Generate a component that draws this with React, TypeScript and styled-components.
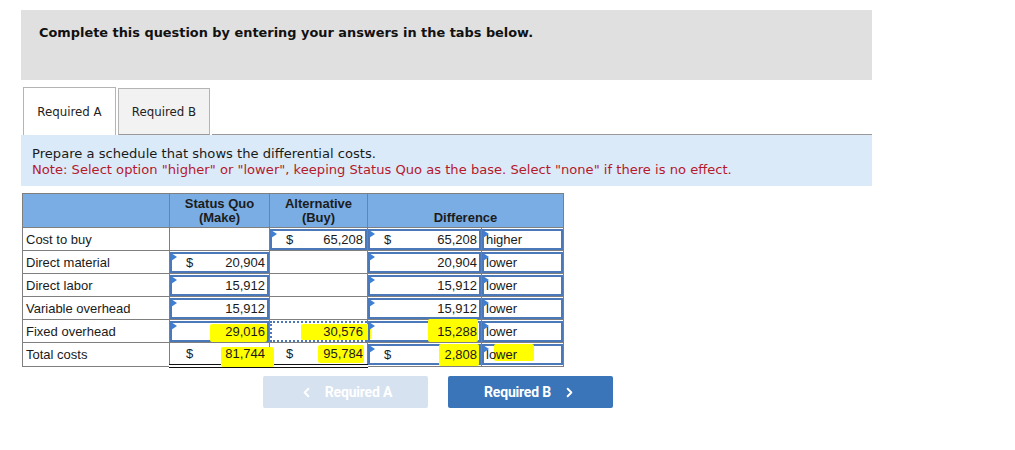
import React from "react";
import styled, { createGlobalStyle, css } from "styled-components";
import { ChevronLeft, ChevronRight } from "lucide-react";

const Global = createGlobalStyle`
  html, body { margin: 0; padding: 0; background: #fff; }
  body { font-family: "DejaVu Sans", Verdana, sans-serif; }
`;

const Page = styled.div`
  width: 851px;
  padding: 10px 0 0 21px;
`;

const Banner = styled.div`
  height: 70px;
  background: #e0e0e0;
  padding: 15px 0 0 18px;
  box-sizing: border-box;
  font-family: "DejaVu Sans", Verdana, sans-serif;
  font-weight: bold;
  font-size: 12.9px;
  color: #111;
`;

const TabBar = styled.div`
  display: flex;
  align-items: flex-end;
  gap: 2px;
  margin-top: 7px;
  padding-left: 2px;
  height: 48px;
`;

const Tab = styled.div<{ $active?: boolean }>`
  width: ${(p) => (p.$active ? 93 : 92)}px;
  height: ${(p) => (p.$active ? 48 : 47)}px;
  box-sizing: border-box;
  border: 1px solid #b4b4b4;
  border-bottom: ${(p) => (p.$active ? "none" : "1px solid #999")};
  background: ${(p) => (p.$active ? "#fff" : "#f2f2f2")};
  display: flex;
  align-items: center;
  justify-content: center;
  font-family: "DejaVu Sans", Verdana, sans-serif;
  font-size: 11.8px;
  color: #222;
  padding-top: 1px;
`;

const TabRule = styled.div`
  flex: 1;
  border-bottom: 1px solid #999;
`;

const Instructions = styled.div`
  height: 51px;
  background: #dbeaf8;
  box-sizing: border-box;
  padding: 11px 0 0 11px;
  font-family: "DejaVu Sans", Verdana, sans-serif;
  font-size: 13.1px;
  line-height: 16px;
  color: #1a1a1a;
`;

const Note = styled.div`
  color: #b5192c;
`;

const Table = styled.table`
  margin: 7px 0 0 1px;
  border-collapse: collapse;
  table-layout: fixed;
  width: 541px;
  font-family: "Liberation Sans", Arial, sans-serif;
  font-size: 13px;
  color: #1a1a1a;
`;

const HeadCell = styled.th`
  background: #79ade4;
  border: 1px solid #7f7f7f;
  height: 34px;
  box-sizing: border-box;
  padding: 0 0 2px;
  vertical-align: bottom;
  font-weight: bold;
  font-size: 13px;
  line-height: 14px;
  color: #1c1c1c;
`;

const LabelCell = styled.td`
  border: 1px solid #7f7f7f;
  height: 23px;
  box-sizing: border-box;
  padding: 0 0 0 3px;
  white-space: nowrap;
`;

const Cell = styled.td<{ $total?: boolean }>`
  border: 1px solid #7f7f7f;
  height: 23px;
  box-sizing: border-box;
  padding: 0;
  ${(p) =>
    p.$total &&
    css`
      border-bottom: 4px double #111;
    `}
`;

const Field = styled.div<{ $kind: "input" | "dotted" | "plain" }>`
  position: relative;
  display: flex;
  align-items: center;
  height: 21px;
  box-sizing: border-box;
  padding: 0 2px 0 14px;
  ${(p) =>
    p.$kind === "input" &&
    css`
      border: 2px solid #4a78b9;
    `}
  ${(p) =>
    p.$kind === "dotted" &&
    css`
      border: 2px dotted #4a78b9;
    `}
  ${(p) =>
    p.$kind === "plain" &&
    css`
      border: 2px solid transparent;
    `}
`;

const Marker = styled.span`
  position: absolute;
  top: -1px;
  left: -1px;
  width: 0;
  height: 0;
  border-top: 4px solid transparent;
  border-bottom: 4px solid transparent;
  border-left: 6px solid #3d7fd6;
  z-index: 2;
`;

const Dollar = styled.span`
  z-index: 1;
`;

const Amount = styled.span`
  margin-left: auto;
  z-index: 1;
`;

const Word = styled.span`
  padding-left: 1px;
  z-index: 1;
`;

const WordField = styled(Field)`
  padding: 0 0 0 1px;
`;

const Highlight = styled.span`
  position: absolute;
  background: #ffff00;
  z-index: 0;
  border-radius: 2px;
`;

const ButtonRow = styled.div`
  display: flex;
  gap: 20px;
  margin: 8px 0 0 242px;
`;

const NavButton = styled.button<{ $disabled?: boolean }>`
  width: 165px;
  height: 32px;
  border: none;
  border-radius: 2px;
  background: ${(p) => (p.$disabled ? "#d6e2f0" : "#3a75ba")};
  color: #fff;
  display: flex;
  align-items: center;
  justify-content: center;
  gap: 11px;
  font-family: Roboto, "Liberation Sans", Arial, sans-serif;
  font-weight: 700;
  font-size: 14px;
  letter-spacing: -0.2px;
  padding: 0;
`;

type HL = { l: number; t: number; w: number; h: number };

function Money({
  kind,
  dollar,
  value,
  marker,
  hl,
}: {
  kind: "input" | "dotted" | "plain";
  dollar?: boolean;
  value?: string;
  marker?: boolean;
  hl?: HL;
}) {
  return (
    <Field $kind={kind}>
      {marker && <Marker />}
      {hl && <Highlight style={{ left: hl.l, top: hl.t, width: hl.w, height: hl.h }} />}
      {dollar && <Dollar>$</Dollar>}
      {value && <Amount>{value}</Amount>}
    </Field>
  );
}

function Choice({ text, hl }: { text: string; hl?: HL }) {
  return (
    <WordField $kind="input">
      <Marker />
      {hl && <Highlight style={{ left: hl.l, top: hl.t, width: hl.w, height: hl.h }} />}
      <Word>{text}</Word>
    </WordField>
  );
}

export default function App() {
  return (
    <>
      <Global />
      <Page>
        <Banner>Complete this question by entering your answers in the tabs below.</Banner>
        <TabBar>
          <Tab $active>Required A</Tab>
          <Tab>Required B</Tab>
          <TabRule />
        </TabBar>
        <Instructions>
          <div>Prepare a schedule that shows the differential costs.</div>
          <Note>
            Note: Select option "higher" or "lower", keeping Status Quo as the base. Select "none" if there is no effect.
          </Note>
        </Instructions>
        <Table>
          <colgroup>
            <col style={{ width: 147 }} />
            <col style={{ width: 100 }} />
            <col style={{ width: 98 }} />
            <col style={{ width: 114 }} />
            <col style={{ width: 82 }} />
          </colgroup>
          <thead>
            <tr>
              <HeadCell />
              <HeadCell>
                Status Quo
                <br />
                (Make)
              </HeadCell>
              <HeadCell>
                Alternative
                <br />
                (Buy)
              </HeadCell>
              <HeadCell colSpan={2}>Difference</HeadCell>
            </tr>
          </thead>
          <tbody>
            <tr>
              <LabelCell>Cost to buy</LabelCell>
              <Cell />
              <Cell>
                <Money kind="input" marker dollar value="65,208" />
              </Cell>
              <Cell>
                <Money kind="input" marker dollar value="65,208" />
              </Cell>
              <Cell>
                <Choice text="higher" />
              </Cell>
            </tr>
            <tr>
              <LabelCell>Direct material</LabelCell>
              <Cell>
                <Money kind="input" marker dollar value="20,904" />
              </Cell>
              <Cell />
              <Cell>
                <Money kind="input" marker value="20,904" />
              </Cell>
              <Cell>
                <Choice text="lower" />
              </Cell>
            </tr>
            <tr>
              <LabelCell>Direct labor</LabelCell>
              <Cell>
                <Money kind="input" marker value="15,912" />
              </Cell>
              <Cell />
              <Cell>
                <Money kind="input" marker value="15,912" />
              </Cell>
              <Cell>
                <Choice text="lower" />
              </Cell>
            </tr>
            <tr>
              <LabelCell>Variable overhead</LabelCell>
              <Cell>
                <Money kind="input" marker value="15,912" />
              </Cell>
              <Cell />
              <Cell>
                <Money kind="input" marker value="15,912" />
              </Cell>
              <Cell>
                <Choice text="lower" />
              </Cell>
            </tr>
            <tr>
              <LabelCell>Fixed overhead</LabelCell>
              <Cell>
                <Money kind="input" marker value="29,016" hl={{ l: 38, t: 1, w: 57, h: 18 }} />
              </Cell>
              <Cell>
                <Money kind="dotted" value="30,576" hl={{ l: 29, t: 1, w: 70, h: 16 }} />
              </Cell>
              <Cell>
                <Money kind="input" marker value="15,288" hl={{ l: 58, t: -4, w: 50, h: 23 }} />
              </Cell>
              <Cell>
                <Choice text="lower" />
              </Cell>
            </tr>
            <tr>
              <LabelCell>Total costs</LabelCell>
              <Cell $total>
                <Money kind="plain" dollar value="81,744" hl={{ l: 49, t: 2, w: 53, h: 20 }} />
              </Cell>
              <Cell $total>
                <Money kind="plain" dollar value="95,784" hl={{ l: 46, t: 0, w: 46, h: 18 }} />
              </Cell>
              <Cell>
                <Money kind="input" marker dollar value="2,808" hl={{ l: 69, t: -2, w: 40, h: 22 }} />
              </Cell>
              <Cell>
                <Choice text="lower" hl={{ l: 10, t: -2, w: 40, h: 17 }} />
              </Cell>
            </tr>
          </tbody>
        </Table>
        <ButtonRow>
          <NavButton $disabled>
            <ChevronLeft size={15} strokeWidth={3} />
            Required A
          </NavButton>
          <NavButton>
            Required B
            <ChevronRight size={15} strokeWidth={3} />
          </NavButton>
        </ButtonRow>
      </Page>
    </>
  );
}
